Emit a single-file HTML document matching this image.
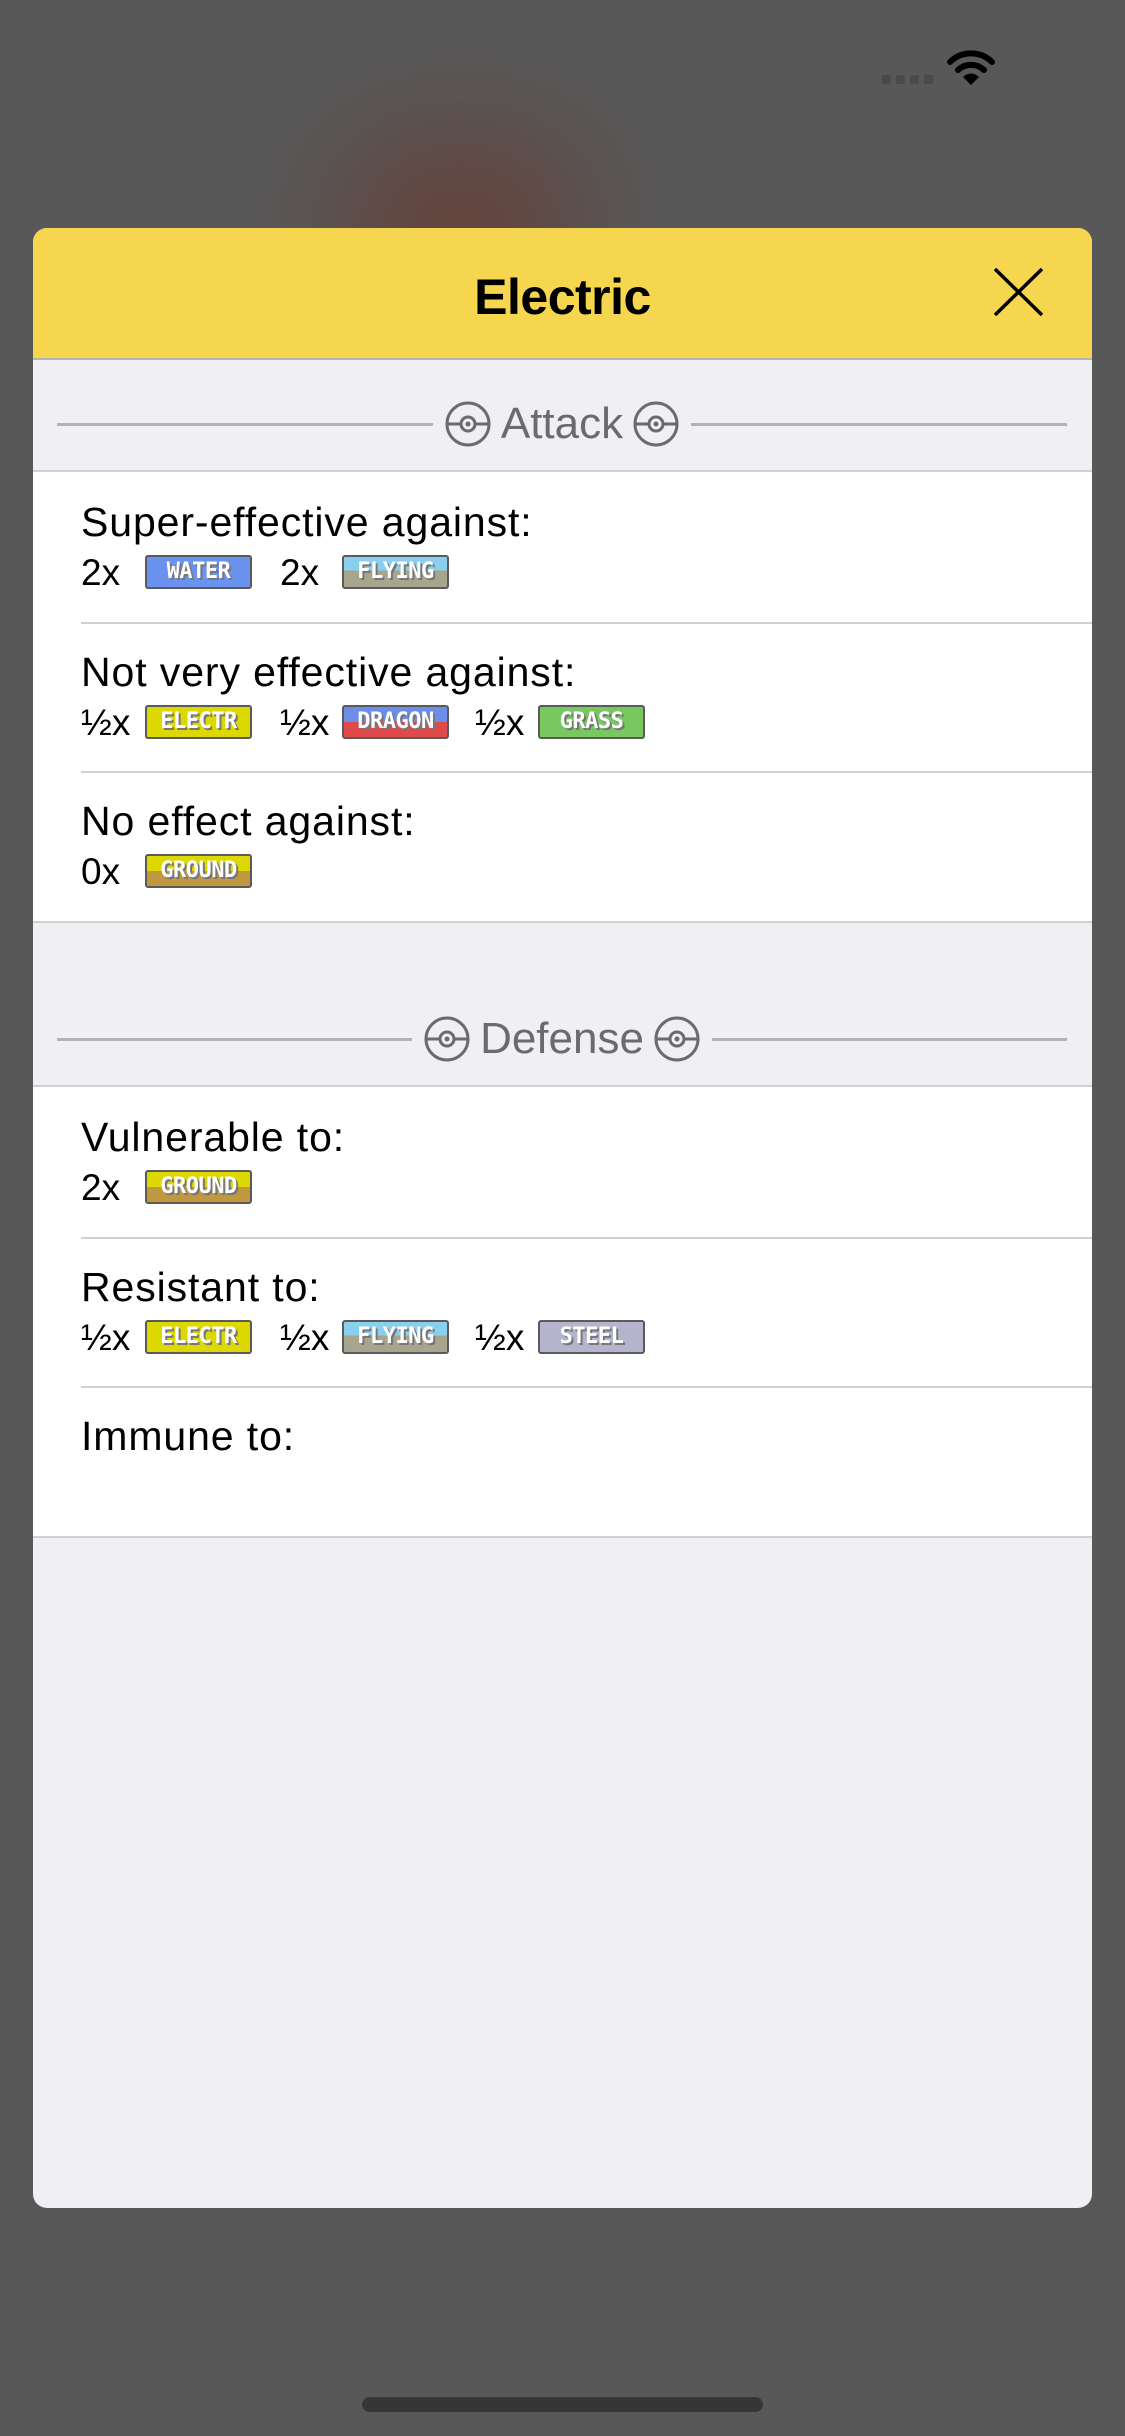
<!DOCTYPE html>
<html><head><meta charset="utf-8"><style>
*{margin:0;padding:0;box-sizing:border-box}
body{width:1125px;height:2436px;overflow:hidden;background:#585858;font-family:"Liberation Sans",sans-serif;position:relative}
.blur{position:absolute;border-radius:50%;filter:blur(60px)}
.modal{position:absolute;left:33px;top:228px;width:1059px;height:1980px;background:#efeff4;border-radius:14px;overflow:hidden}
.hdr{position:absolute;left:0;top:0;width:100%;height:132px;background:#f7d64f;border-bottom:2px solid #b5b5b5}
.title{position:absolute;left:0;width:100%;top:40px;text-align:center;font-weight:bold;font-size:50px;color:#000;letter-spacing:-0.5px}
.sec{position:absolute;left:24px;width:1010px;height:46px;display:flex;align-items:center}
.sec .ln{flex:1;height:3px;background:#b3b3b3}
.sec .t{font-size:44px;color:#6b6b6b;margin:0 2px}
.sec svg{margin:0 12px}
.sec svg.a{margin-right:8px}.sec svg.b{margin-left:8px}
.rows{position:absolute;left:0;width:100%;background:#fff;border-top:2px solid #d0d0d4;border-bottom:2px solid #d0d0d4}
.row{position:relative;height:149.5px}
.row+.row:before{content:"";position:absolute;left:48px;right:0;top:0;height:2px;background:#d0d0d4}
.lab{position:absolute;left:48px;top:27px;font-size:41px;letter-spacing:0.9px;color:#000}
.vals{position:absolute;left:48px;top:81px;height:40px;font-size:37px;color:#000}
.v{position:absolute;top:0;line-height:40px;white-space:nowrap}
.bd{position:absolute;top:2px;width:107px;height:34px;border:2px solid #5a5a5a;border-radius:3px;color:#fff;font-family:"DejaVu Sans Mono","Liberation Mono",monospace;font-weight:bold;font-size:22px;line-height:30px;text-align:center;letter-spacing:-0.5px;text-shadow:2px 2px 0 #777}
</style></head><body>
<div class="blur" style="left:340px;top:140px;width:240px;height:170px;background:#6a3a30;opacity:.8"></div>
<div style="position:absolute;left:882px;top:75px;display:flex;gap:5px"><i style="width:9px;height:9px;background:#4a4a4a;border-radius:2px"></i><i style="width:9px;height:9px;background:#4a4a4a;border-radius:2px"></i><i style="width:9px;height:9px;background:#4a4a4a;border-radius:2px"></i><i style="width:9px;height:9px;background:#4a4a4a;border-radius:2px"></i></div>
<svg style="position:absolute;left:947px;top:50px" width="48" height="36" viewBox="0 0 48 36"><path d="M3 12 A30 30 0 0 1 45 12" stroke="#000" stroke-width="6" fill="none" stroke-linecap="round"/><path d="M11 20 A19 19 0 0 1 37 20" stroke="#000" stroke-width="6" fill="none" stroke-linecap="round"/><path d="M16 27 L24 35 L32 27 A11 11 0 0 0 16 27Z" fill="#000"/></svg>
<div class="modal">
<div class="hdr"><div class="title">Electric</div>
<svg style="position:absolute;left:960px;top:39px" width="51" height="50" viewBox="0 0 51 50"><path d="M2 2 L49 48 M49 2 L2 48" stroke="#000" stroke-width="3.5"/></svg></div>
<div class="sec" style="top:173px"><div class="ln"></div>
<svg class="a" width="46" height="46" viewBox="0 0 46 46"><circle cx="23" cy="23" r="21" fill="none" stroke="#6b6b6b" stroke-width="3"/><line x1="2" y1="23" x2="15" y2="23" stroke="#6b6b6b" stroke-width="3"/><line x1="31" y1="23" x2="44" y2="23" stroke="#6b6b6b" stroke-width="3"/><circle cx="23" cy="23" r="7" fill="none" stroke="#6b6b6b" stroke-width="3"/><circle cx="23" cy="23" r="2.5" fill="#6b6b6b"/></svg>
<span class="t">Attack</span>
<svg class="b" width="46" height="46" viewBox="0 0 46 46"><circle cx="23" cy="23" r="21" fill="none" stroke="#6b6b6b" stroke-width="3"/><line x1="2" y1="23" x2="15" y2="23" stroke="#6b6b6b" stroke-width="3"/><line x1="31" y1="23" x2="44" y2="23" stroke="#6b6b6b" stroke-width="3"/><circle cx="23" cy="23" r="7" fill="none" stroke="#6b6b6b" stroke-width="3"/><circle cx="23" cy="23" r="2.5" fill="#6b6b6b"/></svg>
<div class="ln"></div></div>
<div class="rows" style="top:242px">
<div class="row"><div class="lab">Super-effective against:</div><div class="vals">
<span class="v" style="left:0">2x</span><div class="bd" style="left:64px;background:#6a92ee">WATER</div>
<span class="v" style="left:199px">2x</span><div class="bd" style="left:261px;background:linear-gradient(#88d0ee 45%,#a8a58f 45%)">FLYING</div></div></div>
<div class="row"><div class="lab">Not very effective against:</div><div class="vals">
<span class="v" style="left:0">½x</span><div class="bd" style="left:64px;background:#dcd800">ELECTR</div>
<span class="v" style="left:199px">½x</span><div class="bd" style="left:261px;background:linear-gradient(#6c8ee8 50%,#e0484a 50%)">DRAGON</div>
<span class="v" style="left:394px">½x</span><div class="bd" style="left:457px;background:#78c860">GRASS</div></div></div>
<div class="row"><div class="lab">No effect against:</div><div class="vals">
<span class="v" style="left:0">0x</span><div class="bd" style="left:64px;background:linear-gradient(#dcd800 50%,#c09840 50%)">GROUND</div></div></div>
</div>
<div class="sec" style="top:788px"><div class="ln"></div>
<svg class="a" width="46" height="46" viewBox="0 0 46 46"><circle cx="23" cy="23" r="21" fill="none" stroke="#6b6b6b" stroke-width="3"/><line x1="2" y1="23" x2="15" y2="23" stroke="#6b6b6b" stroke-width="3"/><line x1="31" y1="23" x2="44" y2="23" stroke="#6b6b6b" stroke-width="3"/><circle cx="23" cy="23" r="7" fill="none" stroke="#6b6b6b" stroke-width="3"/><circle cx="23" cy="23" r="2.5" fill="#6b6b6b"/></svg>
<span class="t">Defense</span>
<svg class="b" width="46" height="46" viewBox="0 0 46 46"><circle cx="23" cy="23" r="21" fill="none" stroke="#6b6b6b" stroke-width="3"/><line x1="2" y1="23" x2="15" y2="23" stroke="#6b6b6b" stroke-width="3"/><line x1="31" y1="23" x2="44" y2="23" stroke="#6b6b6b" stroke-width="3"/><circle cx="23" cy="23" r="7" fill="none" stroke="#6b6b6b" stroke-width="3"/><circle cx="23" cy="23" r="2.5" fill="#6b6b6b"/></svg>
<div class="ln"></div></div>
<div class="rows" style="top:857px">
<div class="row"><div class="lab">Vulnerable to:</div><div class="vals">
<span class="v" style="left:0">2x</span><div class="bd" style="left:64px;background:linear-gradient(#dcd800 50%,#c09840 50%)">GROUND</div></div></div>
<div class="row"><div class="lab">Resistant to:</div><div class="vals">
<span class="v" style="left:0">½x</span><div class="bd" style="left:64px;background:#dcd800">ELECTR</div>
<span class="v" style="left:199px">½x</span><div class="bd" style="left:261px;background:linear-gradient(#88d0ee 45%,#a8a58f 45%)">FLYING</div>
<span class="v" style="left:394px">½x</span><div class="bd" style="left:457px;background:#b4b4cc">STEEL</div></div></div>
<div class="row"><div class="lab">Immune to:</div></div>
</div>
</div>
<div style="position:absolute;left:362px;top:2397px;width:401px;height:15px;border-radius:8px;background:#363636"></div>
</body></html>
